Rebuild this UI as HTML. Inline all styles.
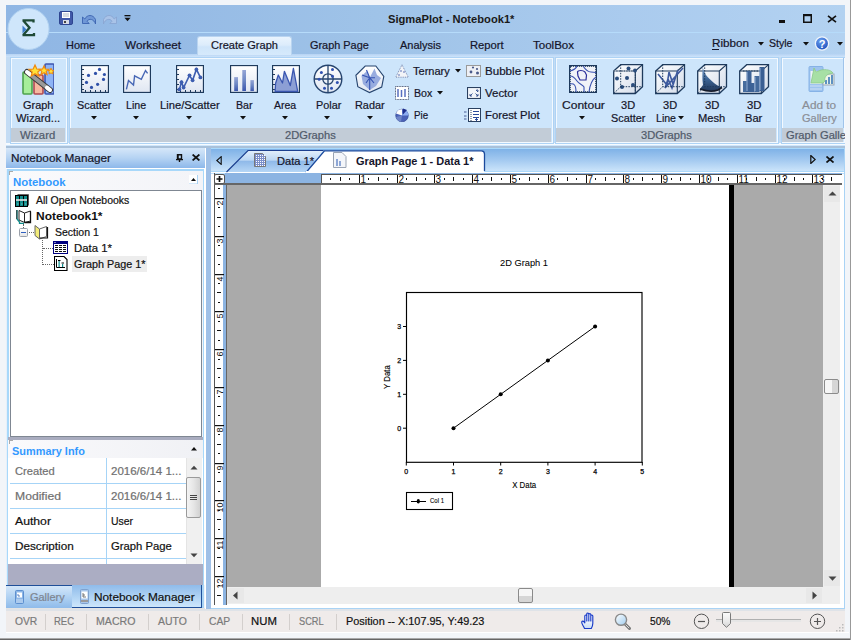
<!DOCTYPE html>
<html><head><meta charset="utf-8"><style>
html,body{margin:0;padding:0;}
body{width:851px;height:640px;position:relative;overflow:hidden;font-family:"Liberation Sans",sans-serif;}
body>div,body>svg{position:absolute;}
.t{white-space:nowrap;transform-origin:0 0;}
</style></head><body>
<div style="left:0px;top:0px;width:851px;height:640px;background:#f2f5f9"></div>
<div style="left:0px;top:638px;width:851px;height:1px;background:#a8a8a8"></div>
<div style="left:0px;top:639px;width:851px;height:1px;background:#666"></div>
<div style="left:850px;top:0px;width:1px;height:640px;background:#999"></div>
<div style="left:6px;top:5px;width:839px;height:27px;background:linear-gradient(90deg,#8fb6e4 0px,#95bae5 150px,#9fc3e8 370px,#aacbee 620px,#b3d2f1 839px)"></div>
<div style="left:6px;top:32px;width:839px;height:1px;background:#b6dbfa"></div>
<div style="left:6px;top:33px;width:839px;height:22px;background:linear-gradient(90deg,#8fb6e4 0px,#95bae5 150px,#9fc3e8 370px,#aacbee 620px,#b3d2f1 839px)"></div>
<div style="left:6px;top:54px;width:839px;height:3px;background:linear-gradient(#b6d3f3,#cde3fa)"></div>
<div style="left:6px;top:57px;width:839px;height:88px;background:#c4dcf4"></div>
<div style="left:6px;top:143px;width:839px;height:2px;background:#f6fbff"></div>
<div style="left:6px;top:145px;width:839px;height:1px;background:#cfe6fb"></div>
<div style="left:6px;top:146px;width:839px;height:2px;background:#a9c1da"></div>
<svg style="left:6px;top:6px;" width="46" height="46" viewBox="0 0 46 46"><circle cx="22.5" cy="23" r="20.5" fill="#cfe6fb" stroke="#b4d4f2" stroke-width="1"/><path d="M16.5 14.3 H27.5 V16.5 M17 14.3 L23.5 21.7 L17 29.2 M16.5 29.2 H28 V27" fill="none" stroke="#1f4a36" stroke-width="2.3"/><path d="M16.5 19.5 L20.5 23.5 L16.5 27.5z" fill="#3d7cc9"/></svg>
<svg style="left:59px;top:11px;" width="14" height="14" viewBox="0 0 14 14"><rect x="0.5" y="0.5" width="13" height="13" rx="1.5" fill="#4058a8" stroke="#2e4590"/><rect x="3" y="1" width="8" height="6" fill="#fff"/><path d="M4 3h6M4 5h6" stroke="#9aa6b8" stroke-width="0.8"/><rect x="4" y="9" width="6" height="4" fill="#d8dce6"/><rect x="5" y="10" width="2" height="2" fill="#444"/></svg>
<svg style="left:81px;top:12px;" width="16" height="13" viewBox="0 0 16 13"><path d="M1.5 11.5 V5 L3.8 7 C6 2.5 12 2 14.5 7.5 L14.5 12 C13 7 8 6 6 9.2 L8.2 11.5z" fill="#6f97d6" stroke="#3b63b0" stroke-width="0.9" stroke-linejoin="round"/></svg>
<svg style="left:102px;top:12px;" width="16" height="13" viewBox="0 0 16 13"><path d="M14.5 11.5 V5 L12.2 7 C10 2.5 4 2 1.5 7.5 L1.5 12 C3 7 8 6 10 9.2 L7.8 11.5z" fill="#a9c3e8" stroke="#8aa6d2" stroke-width="0.9" stroke-linejoin="round"/></svg>
<svg style="left:124px;top:15px;" width="7" height="7" viewBox="0 0 7 7"><rect x="0.5" y="0" width="6" height="1.3" fill="#111"/><path d="M0.5 2.8h6l-3 3.5z" fill="#111"/></svg>
<div class="t" style="left:388px;top:14px;font-size:11px;line-height:11px;color:#1a1a1a;font-weight:bold;transform:scaleX(1.0143);">SigmaPlot - Notebook1*</div>
<div style="left:779px;top:20px;width:6px;height:3px;background:#111"></div>
<svg style="left:803px;top:14px;" width="9" height="9" viewBox="0 0 9 9"><rect x="0.75" y="0.75" width="7.5" height="7.5" fill="none" stroke="#111" stroke-width="1.5"/><rect x="0" y="0" width="9" height="2.2" fill="#111"/></svg>
<svg style="left:827px;top:15px;" width="10" height="8" viewBox="0 0 10 8"><path d="M1 0.8 L9 7.2 M9 0.8 L1 7.2" stroke="#111" stroke-width="1.7"/></svg>
<div style="left:197px;top:36px;width:95px;height:19px;background:linear-gradient(#eaf4fe 0%,#dcecfb 45%,#cfe5fa 55%,#d6eafc 100%);border:1px solid #b9d4f0;border-bottom:none;border-radius:3px 3px 0 0;box-sizing:border-box"></div>
<div class="t" style="left:66px;top:40px;font-size:11px;line-height:11px;color:#15152a;transform:scaleX(0.9951);-webkit-text-stroke:0.2px #15152a;">Home</div>
<div class="t" style="left:125px;top:40px;font-size:11px;line-height:11px;color:#15152a;transform:scaleX(1.0689);-webkit-text-stroke:0.2px #15152a;">Worksheet</div>
<div class="t" style="left:211px;top:40px;font-size:11px;line-height:11px;color:#15152a;transform:scaleX(1.0047);-webkit-text-stroke:0.2px #15152a;">Create Graph</div>
<div class="t" style="left:309.5px;top:40px;font-size:11px;line-height:11px;color:#15152a;transform:scaleX(0.9903);-webkit-text-stroke:0.2px #15152a;">Graph Page</div>
<div class="t" style="left:399.5px;top:40px;font-size:11px;line-height:11px;color:#15152a;transform:scaleX(1.0008);-webkit-text-stroke:0.2px #15152a;">Analysis</div>
<div class="t" style="left:470px;top:40px;font-size:11px;line-height:11px;color:#15152a;transform:scaleX(1.0202);-webkit-text-stroke:0.2px #15152a;">Report</div>
<div class="t" style="left:533px;top:40px;font-size:11px;line-height:11px;color:#15152a;transform:scaleX(1.0471);-webkit-text-stroke:0.2px #15152a;">ToolBox</div>
<div class="t" style="left:712px;top:38px;font-size:11px;line-height:11px;color:#15152a;transform:scaleX(1.0609);-webkit-text-stroke:0.2px #15152a;">Ribbon</div>
<div style="left:712px;top:49px;width:7px;height:1px;background:#15152a"></div>
<svg style="left:758px;top:42px;" width="6" height="4" viewBox="0 0 6 4"><path d="M0 0h6l-3 3.5z" fill="#111"/></svg>
<svg style="left:803px;top:42px;" width="6" height="4" viewBox="0 0 6 4"><path d="M0 0h6l-3 3.5z" fill="#111"/></svg>
<svg style="left:837px;top:42px;" width="6" height="4" viewBox="0 0 6 4"><path d="M0 0h6l-3 3.5z" fill="#111"/></svg>
<div class="t" style="left:769px;top:38px;font-size:11px;line-height:11px;color:#15152a;transform:scaleX(0.9604);-webkit-text-stroke:0.2px #15152a;">Style</div>
<svg style="left:814px;top:36px;" width="16" height="15" viewBox="0 0 16 15"><defs><radialGradient id="hb" cx="0.4" cy="0.3" r="0.8"><stop offset="0" stop-color="#6aa0f0"/><stop offset="1" stop-color="#1848b8"/></radialGradient></defs><circle cx="8" cy="7.5" r="6.6" fill="url(#hb)" stroke="#eef4fc" stroke-width="1.3"/><text x="8" y="11.5" font-family="Liberation Sans" font-weight="bold" font-size="11" fill="#fff" text-anchor="middle">?</text></svg>
<div style="left:10px;top:57px;width:58px;height:87px;background:#cde5fb;border:1px solid #aed3f5;box-sizing:border-box"></div>
<div style="left:11px;top:58px;width:56px;height:85px;border:1px solid #f3f9ff;box-sizing:border-box"></div>
<div style="left:11px;top:128px;width:54px;height:14px;background:#c2ccd7"></div>
<div class="t" style="left:20.2px;top:130px;font-size:11px;line-height:11px;color:#505a6a;transform:scaleX(1.0287);-webkit-text-stroke:0.2px #505a6a;">Wizard</div>
<div style="left:69px;top:57px;width:485px;height:87px;background:#cde5fb;border:1px solid #aed3f5;box-sizing:border-box"></div>
<div style="left:70px;top:58px;width:483px;height:85px;border:1px solid #f3f9ff;box-sizing:border-box"></div>
<div style="left:70px;top:128px;width:481px;height:14px;background:#c2ccd7"></div>
<div class="t" style="left:284.8px;top:130px;font-size:11px;line-height:11px;color:#505a6a;transform:scaleX(1.0128);-webkit-text-stroke:0.2px #505a6a;">2DGraphs</div>
<div style="left:555px;top:57px;width:224px;height:87px;background:#cde5fb;border:1px solid #aed3f5;box-sizing:border-box"></div>
<div style="left:556px;top:58px;width:222px;height:85px;border:1px solid #f3f9ff;box-sizing:border-box"></div>
<div style="left:556px;top:128px;width:220px;height:14px;background:#c2ccd7"></div>
<div class="t" style="left:641px;top:130px;font-size:11px;line-height:11px;color:#505a6a;transform:scaleX(1.0128);-webkit-text-stroke:0.2px #505a6a;">3DGraphs</div>
<div style="left:781px;top:57px;width:65px;height:87px;background:#cde5fb;border:1px solid #aed3f5;box-sizing:border-box"></div>
<div style="left:782px;top:58px;width:63px;height:85px;border:1px solid #f3f9ff;box-sizing:border-box"></div>
<div style="left:782px;top:128px;width:61px;height:14px;background:#c2ccd7"></div>
<div class="t" style="left:785.6px;top:130px;font-size:11px;line-height:11px;color:#505a6a;transform:scaleX(1.0111);-webkit-text-stroke:0.2px #505a6a;">Graph Galle</div>
<div style="left:845px;top:50px;width:5px;height:100px;background:#f2f5f9"></div>
<div style="left:843px;top:58px;width:1px;height:70px;background:#9fc3ea"></div>
<div class="t" style="left:23px;top:100px;font-size:11px;line-height:11px;color:#15152a;transform:scaleX(0.9937);-webkit-text-stroke:0.2px #15152a;">Graph</div>
<div class="t" style="left:16.3px;top:113px;font-size:11px;line-height:11px;color:#15152a;transform:scaleX(1.0160);-webkit-text-stroke:0.2px #15152a;">Wizard...</div>
<div class="t" style="left:77.4px;top:100px;font-size:11px;line-height:11px;color:#15152a;transform:scaleX(0.9864);-webkit-text-stroke:0.2px #15152a;">Scatter</div>
<svg style="left:91px;top:116px;" width="6" height="4" viewBox="0 0 6 4"><path d="M0 0h6l-3 3.5z" fill="#111"/></svg>
<div class="t" style="left:126.4px;top:100px;font-size:11px;line-height:11px;color:#15152a;transform:scaleX(0.9658);-webkit-text-stroke:0.2px #15152a;">Line</div>
<svg style="left:133px;top:116px;" width="6" height="4" viewBox="0 0 6 4"><path d="M0 0h6l-3 3.5z" fill="#111"/></svg>
<div class="t" style="left:160.2px;top:100px;font-size:11px;line-height:11px;color:#15152a;transform:scaleX(1.0162);-webkit-text-stroke:0.2px #15152a;">Line/Scatter</div>
<svg style="left:186px;top:116px;" width="6" height="4" viewBox="0 0 6 4"><path d="M0 0h6l-3 3.5z" fill="#111"/></svg>
<div class="t" style="left:235.8px;top:100px;font-size:11px;line-height:11px;color:#15152a;transform:scaleX(0.9635);-webkit-text-stroke:0.2px #15152a;">Bar</div>
<svg style="left:240px;top:116px;" width="6" height="4" viewBox="0 0 6 4"><path d="M0 0h6l-3 3.5z" fill="#111"/></svg>
<div class="t" style="left:274.3px;top:100px;font-size:11px;line-height:11px;color:#15152a;transform:scaleX(0.9548);-webkit-text-stroke:0.2px #15152a;">Area</div>
<svg style="left:282px;top:116px;" width="6" height="4" viewBox="0 0 6 4"><path d="M0 0h6l-3 3.5z" fill="#111"/></svg>
<div class="t" style="left:315.5px;top:100px;font-size:11px;line-height:11px;color:#15152a;transform:scaleX(0.9849);-webkit-text-stroke:0.2px #15152a;">Polar</div>
<svg style="left:324px;top:116px;" width="6" height="4" viewBox="0 0 6 4"><path d="M0 0h6l-3 3.5z" fill="#111"/></svg>
<div class="t" style="left:355.3px;top:100px;font-size:11px;line-height:11px;color:#15152a;transform:scaleX(0.9877);-webkit-text-stroke:0.2px #15152a;">Radar</div>
<svg style="left:367px;top:116px;" width="6" height="4" viewBox="0 0 6 4"><path d="M0 0h6l-3 3.5z" fill="#111"/></svg>
<div class="t" style="left:562.4px;top:100px;font-size:11px;line-height:11px;color:#15152a;transform:scaleX(1.0956);-webkit-text-stroke:0.2px #15152a;">Contour</div>
<svg style="left:579px;top:116px;" width="6" height="4" viewBox="0 0 6 4"><path d="M0 0h6l-3 3.5z" fill="#111"/></svg>
<div class="t" style="left:620.6px;top:100px;font-size:11px;line-height:11px;color:#15152a;transform:scaleX(1.0027);-webkit-text-stroke:0.2px #15152a;">3D</div>
<div class="t" style="left:662.6px;top:100px;font-size:11px;line-height:11px;color:#15152a;transform:scaleX(1.0027);-webkit-text-stroke:0.2px #15152a;">3D</div>
<div class="t" style="left:704.6px;top:100px;font-size:11px;line-height:11px;color:#15152a;transform:scaleX(1.0240);-webkit-text-stroke:0.2px #15152a;">3D</div>
<div class="t" style="left:746.5px;top:100px;font-size:11px;line-height:11px;color:#15152a;transform:scaleX(1.0311);-webkit-text-stroke:0.2px #15152a;">3D</div>
<div class="t" style="left:610.6px;top:113px;font-size:11px;line-height:11px;color:#15152a;transform:scaleX(0.9864);-webkit-text-stroke:0.2px #15152a;">Scatter</div>
<div class="t" style="left:655.5px;top:113px;font-size:11px;line-height:11px;color:#15152a;transform:scaleX(0.9610);-webkit-text-stroke:0.2px #15152a;">Line</div>
<div class="t" style="left:698.2px;top:113px;font-size:11px;line-height:11px;color:#15152a;transform:scaleX(1.0146);-webkit-text-stroke:0.2px #15152a;">Mesh</div>
<div class="t" style="left:745.2px;top:113px;font-size:11px;line-height:11px;color:#15152a;transform:scaleX(1.0102);-webkit-text-stroke:0.2px #15152a;">Bar</div>
<svg style="left:678px;top:116px;" width="6" height="4" viewBox="0 0 6 4"><path d="M0 0h6l-3 3.5z" fill="#111"/></svg>
<div class="t" style="left:802.4px;top:100px;font-size:11px;line-height:11px;color:#8a8e96;transform:scaleX(1.0740);-webkit-text-stroke:0.2px #8a8e96;">Add to</div>
<div class="t" style="left:802.4px;top:113px;font-size:11px;line-height:11px;color:#8a8e96;transform:scaleX(0.9987);-webkit-text-stroke:0.2px #8a8e96;">Gallery</div>
<div class="t" style="left:413.1px;top:66px;font-size:11px;line-height:11px;color:#15152a;transform:scaleX(1.0031);-webkit-text-stroke:0.2px #15152a;">Ternary</div>
<div class="t" style="left:413.5px;top:88px;font-size:11px;line-height:11px;color:#15152a;transform:scaleX(0.9647);-webkit-text-stroke:0.2px #15152a;">Box</div>
<div class="t" style="left:413.5px;top:110px;font-size:11px;line-height:11px;color:#15152a;transform:scaleX(0.8864);-webkit-text-stroke:0.2px #15152a;">Pie</div>
<div class="t" style="left:485.3px;top:66px;font-size:11px;line-height:11px;color:#15152a;transform:scaleX(1.0531);-webkit-text-stroke:0.2px #15152a;">Bubble Plot</div>
<div class="t" style="left:485.3px;top:88px;font-size:11px;line-height:11px;color:#15152a;transform:scaleX(1.0416);-webkit-text-stroke:0.2px #15152a;">Vector</div>
<div class="t" style="left:485.3px;top:110px;font-size:11px;line-height:11px;color:#15152a;transform:scaleX(1.0260);-webkit-text-stroke:0.2px #15152a;">Forest Plot</div>
<svg style="left:455px;top:69px;" width="6" height="4" viewBox="0 0 6 4"><path d="M0 0h6l-3 3.5z" fill="#111"/></svg>
<svg style="left:437px;top:91px;" width="6" height="4" viewBox="0 0 6 4"><path d="M0 0h6l-3 3.5z" fill="#111"/></svg>
<div style="left:6px;top:148px;width:200px;height:20px;background:linear-gradient(#d6e7f9,#b5d3f3 50%,#8db8ea)"></div>
<div class="t" style="left:10.5px;top:153px;font-size:11px;line-height:11px;color:#15152a;transform:scaleX(1.0681);-webkit-text-stroke:0.2px #15152a;">Notebook Manager</div>
<svg style="left:176px;top:154px;" width="7" height="8" viewBox="0 0 7 8"><path d="M1.5 0.8 H5.5 V5 H1.5z M0 5.6 H7 M3.5 5.6 V8" fill="none" stroke="#111" stroke-width="1.4"/><path d="M2 1v4" stroke="#111" stroke-width="1.4"/></svg>
<svg style="left:192px;top:154px;" width="8" height="7" viewBox="0 0 8 7"><path d="M0.6 0.5 L7.4 6.5 M7.4 0.5 L0.6 6.5" stroke="#111" stroke-width="1.7"/></svg>
<div style="left:6px;top:168px;width:200px;height:1px;background:#ffffff"></div>
<div style="left:6px;top:169px;width:199px;height:416px;background:#a8d8fa"></div>
<div style="left:6px;top:169px;width:1px;height:416px;background:#e6f0fa"></div>
<div style="left:204px;top:169px;width:2px;height:416px;background:#ffffff"></div>
<div style="left:9px;top:171px;width:194px;height:267px;background:linear-gradient(90deg,#fafafc,#f3f4f8)"></div>
<div style="left:9px;top:171px;width:4px;height:1px;background:#aaa"></div>
<div style="left:9px;top:171px;width:1px;height:4px;background:#aaa"></div>
<div class="t" style="left:12.5px;top:177px;font-size:11px;line-height:11px;color:#3399ff;font-weight:bold;transform:scaleX(1.0371);">Notebook</div>
<svg style="left:189px;top:175px;" width="9" height="9" viewBox="0 0 9 9"><rect x="0" y="0" width="9" height="9" fill="#fff"/><path d="M8.5 0V9H0" fill="none" stroke="#a9d3f5"/><path d="M2 6h5l-2.5-3z" fill="#111"/></svg>
<div style="left:10px;top:190px;width:192px;height:247px;background:#fff;border:1px solid #7f8792;box-sizing:border-box"></div>
<div style="left:8px;top:437px;width:195px;height:3px;background:#a9acbf"></div>
<div style="left:8px;top:440px;width:195px;height:18px;background:linear-gradient(90deg,#fafafc,#f0f1f5)"></div>
<div style="left:9px;top:440px;width:4px;height:1px;background:#aaa"></div>
<div style="left:9px;top:440px;width:1px;height:4px;background:#aaa"></div>
<div class="t" style="left:12.3px;top:446px;font-size:11px;line-height:11px;color:#3399ff;font-weight:bold;transform:scaleX(0.9935);">Summary Info</div>
<svg style="left:190px;top:446px;" width="8" height="5" viewBox="0 0 8 5"><path d="M1 4.5h6l-3-3.5z" fill="#111"/></svg>
<div style="left:8px;top:458px;width:195px;height:106px;background:#fff"></div>
<div style="left:10px;top:483px;width:176px;height:1px;background:#a6d4f7"></div>
<div style="left:10px;top:508px;width:176px;height:1px;background:#a6d4f7"></div>
<div style="left:10px;top:533px;width:176px;height:1px;background:#a6d4f7"></div>
<div style="left:10px;top:558px;width:176px;height:1px;background:#a6d4f7"></div>
<div style="left:106px;top:458px;width:1px;height:106px;background:#a6d4f7"></div>
<div style="left:8px;top:564px;width:195px;height:21px;background:#abadc3"></div>
<div style="left:186px;top:458px;width:16px;height:106px;background:#f0f0f0;border-left:1px solid #e4e4e4;box-sizing:border-box"></div>
<svg style="left:190px;top:465px;" width="8" height="5" viewBox="0 0 8 5"><path d="M0.5 4.5 L4 0.8 L7.5 4.5z" fill="#444"/></svg>
<svg style="left:190px;top:553px;" width="8" height="5" viewBox="0 0 8 5"><path d="M0.5 0.5 L4 4.2 L7.5 0.5z" fill="#444"/></svg>
<div style="left:186px;top:477px;width:15px;height:41px;background:linear-gradient(90deg,#f4f4f4,#e6e6e6 50%,#d2d2d2);border:1px solid #9a9a9a;border-radius:2px;box-sizing:border-box"></div>
<svg style="left:189px;top:494px;" width="9" height="7" viewBox="0 0 9 7"><rect x="1" y="1" width="7" height="1" fill="#444"/><rect x="1" y="3" width="7" height="1" fill="#444"/><rect x="1" y="5" width="7" height="1" fill="#444"/></svg>
<div class="t" style="left:14.6px;top:466px;font-size:11px;line-height:11px;color:#707070;transform:scaleX(1.0139);-webkit-text-stroke:0.2px #707070;">Created</div>
<div class="t" style="left:14.6px;top:491px;font-size:11px;line-height:11px;color:#707070;transform:scaleX(1.1059);-webkit-text-stroke:0.2px #707070;">Modified</div>
<div class="t" style="left:14.6px;top:516px;font-size:11px;line-height:11px;color:#111;transform:scaleX(1.1098);-webkit-text-stroke:0.2px #111;">Author</div>
<div class="t" style="left:14.6px;top:541px;font-size:11px;line-height:11px;color:#111;transform:scaleX(1.0667);-webkit-text-stroke:0.2px #111;">Description</div>
<div class="t" style="left:111px;top:466px;font-size:11px;line-height:11px;color:#707070;transform:scaleX(1.0464);-webkit-text-stroke:0.2px #707070;">2016/6/14 1...</div>
<div class="t" style="left:111px;top:491px;font-size:11px;line-height:11px;color:#707070;transform:scaleX(1.0464);-webkit-text-stroke:0.2px #707070;">2016/6/14 1...</div>
<div class="t" style="left:111px;top:516px;font-size:11px;line-height:11px;color:#111;transform:scaleX(0.9475);-webkit-text-stroke:0.2px #111;">User</div>
<div class="t" style="left:111px;top:541px;font-size:11px;line-height:11px;color:#111;transform:scaleX(1.0240);-webkit-text-stroke:0.2px #111;">Graph Page</div>
<svg style="left:14px;top:193px;" width="17" height="15" viewBox="0 0 17 15"><path d="M2 3 L4 1 H15 L13 3z" fill="#666"/><path d="M13 3 L15 1 V12 L13 14z" fill="#555"/><rect x="1.5" y="2.5" width="4" height="11" fill="#108a8a" stroke="#000" stroke-width="1"/><rect x="5.5" y="2.5" width="4" height="11" fill="#108a8a" stroke="#000" stroke-width="1"/><rect x="9.5" y="2.5" width="4" height="11" fill="#108a8a" stroke="#000" stroke-width="1"/><path d="M2 7h11" stroke="#e8e8e8" stroke-width="1.6"/><path d="M3.5 11h.8M7.5 11h.8M11.5 11h.8" stroke="#cfe" stroke-width="1"/></svg>
<div class="t" style="left:35.9px;top:195px;font-size:11px;line-height:11px;color:#111;transform:scaleX(0.9540);-webkit-text-stroke:0.2px #111;">All Open Notebooks</div>
<svg style="left:16px;top:208px;" width="16" height="16" viewBox="0 0 16 16"><path d="M3 2.5 L8.5 5 V14.5 L3 12z" fill="#fff" stroke="#222" stroke-width="1"/><path d="M8.5 5 L14.5 3 V13 L8.5 14.5z" fill="#fff" stroke="#222" stroke-width="1"/><path d="M14.5 3.5 V14.5 H8.5" fill="none" stroke="#111" stroke-width="1.3"/><path d="M1 2 V11 L3.5 14 V15.5 H8" fill="none" stroke="#0f8a8a" stroke-width="1.3"/><path d="M0.8 2 V11" stroke="#111" stroke-width="0.8"/></svg>
<div class="t" style="left:36.4px;top:211px;font-size:11px;line-height:11px;color:#111;font-weight:bold;transform:scaleX(1.0879);">Notebook1*</div>
<svg style="left:34px;top:224px;" width="15" height="16" viewBox="0 0 15 16"><path d="M1 1.5 L5.5 5 V15 L1 11.5z" fill="#f3ec7a" stroke="#666" stroke-width="1"/><path d="M5.5 5 L12.5 2.5 V12.5 L5.5 15z" fill="#fff" stroke="#666" stroke-width="1"/><path d="M13.5 3 V14 H6" fill="none" stroke="#111" stroke-width="1.2"/></svg>
<div style="left:19px;top:228px;width:9px;height:9px;background:linear-gradient(#fff,#e6e6e6);border:1px solid #9aa0aa;border-radius:1.5px;box-sizing:border-box"></div>
<div style="left:21px;top:232px;width:5px;height:1px;background:#3060c0"></div>
<div class="t" style="left:54.7px;top:227px;font-size:11px;line-height:11px;color:#111;transform:scaleX(0.9541);-webkit-text-stroke:0.2px #111;">Section 1</div>
<svg style="left:53px;top:241px;" width="15" height="13" viewBox="0 0 15 13"><rect x="0.5" y="0.5" width="14" height="12" fill="#fff" stroke="#000080" stroke-width="1"/><rect x="0.5" y="0.5" width="14" height="2.5" fill="#000080"/><rect x="1.5" y="1" width="1" height="1" fill="#fff"/><rect x="2" y="4" width="3" height="1" fill="#111"/><rect x="2" y="6" width="3" height="1" fill="#111"/><rect x="2" y="8" width="3" height="1" fill="#111"/><rect x="2" y="10" width="3" height="1" fill="#111"/><rect x="6" y="4" width="3" height="1" fill="#111"/><rect x="6" y="6" width="3" height="1" fill="#111"/><rect x="6" y="8" width="3" height="1" fill="#111"/><rect x="6" y="10" width="3" height="1" fill="#111"/><rect x="10" y="4" width="3" height="1" fill="#111"/><rect x="10" y="6" width="3" height="1" fill="#111"/><rect x="10" y="8" width="3" height="1" fill="#111"/><rect x="10" y="10" width="3" height="1" fill="#111"/></svg>
<div class="t" style="left:73.8px;top:243px;font-size:11px;line-height:11px;color:#111;transform:scaleX(1.0322);-webkit-text-stroke:0.2px #111;">Data 1*</div>
<div style="left:72px;top:256px;width:75px;height:16px;background:#ededed"></div>
<svg style="left:54px;top:256px;" width="14" height="15" viewBox="0 0 14 15"><path d="M0.5 0.5 H10 L13 3.5 V14.5 H0.5z" fill="#fff" stroke="#000" stroke-width="1.1"/><path d="M2.5 3 V11.5 H11" fill="none" stroke="#000" stroke-width="1"/><rect x="4.5" y="5" width="1.2" height="6" fill="#109090"/><path d="M4 4.5h2.5" stroke="#000"/><rect x="8" y="8" width="1.2" height="3" fill="#109090"/><path d="M7.5 7h2.5" stroke="#000"/></svg>
<div class="t" style="left:73.8px;top:259px;font-size:11px;line-height:11px;color:#111;transform:scaleX(0.9802);-webkit-text-stroke:0.2px #111;">Graph Page 1*</div>
<div style="left:23px;top:224px;width:0;height:4px;border-left:1px dotted #666"></div>
<div style="left:29px;top:232px;width:5px;height:0;border-top:1px dotted #666"></div>
<div style="left:42px;top:240px;width:0;height:25px;border-left:1px dotted #666"></div>
<div style="left:43px;top:248px;width:10px;height:0;border-top:1px dotted #666"></div>
<div style="left:43px;top:264px;width:11px;height:0;border-top:1px dotted #666"></div>
<div style="left:6px;top:585px;width:66px;height:23px;background:linear-gradient(#d3e6f9,#a9cdf1 60%,#8fbbea);border-top:1.5px solid #1f4f99;box-sizing:border-box"></div>
<div style="left:72px;top:585px;width:130px;height:23px;background:linear-gradient(#8fbbea,#b4d6f5 60%,#cde6fb);border-bottom:1.5px solid #1f4f99;border-right:1px solid #1f4f99;box-sizing:border-box"></div>
<div style="left:202px;top:585px;width:2px;height:23px;background:#a9d3f5"></div>
<div style="left:6px;top:608px;width:199px;height:3px;background:#e4e4e4"></div>
<div class="t" style="left:30px;top:592px;font-size:11px;line-height:11px;color:#7f8590;transform:scaleX(0.9959);-webkit-text-stroke:0.2px #7f8590;">Gallery</div>
<div class="t" style="left:94.3px;top:592px;font-size:11px;line-height:11px;color:#111;transform:scaleX(1.0756);-webkit-text-stroke:0.2px #111;">Notebook Manager</div>
<svg style="left:15px;top:590px;" width="9" height="14" viewBox="0 0 9 14"><rect x="0.5" y="0.5" width="8" height="13" rx="1" fill="#8db6e6" stroke="#5d8fcf"/><rect x="2" y="2.5" width="5" height="5" fill="#fff"/><path d="M3 4v2h2" stroke="#3a6ab8" fill="none" stroke-width="0.8"/><path d="M1 10h7M1 12h7" stroke="#c9def5" stroke-width="1"/></svg>
<svg style="left:80px;top:589px;" width="9" height="15" viewBox="0 0 9 15"><rect x="0.5" y="0.5" width="8" height="14" rx="1" fill="#a9c6ea" stroke="#7fa2cf"/><rect x="1.5" y="2.5" width="6" height="7" fill="#fff"/><path d="M3 4v4h3M3 6h2" stroke="#555" fill="none" stroke-width="0.8"/><rect x="1" y="11" width="7" height="2" fill="#9a9a9a"/></svg>
<div style="left:205px;top:148px;width:1px;height:463px;background:#ffffff"></div>
<div style="left:206px;top:148px;width:5px;height:463px;background:#9fc0e7"></div>
<div style="left:211px;top:148px;width:634px;height:461px;background:#fff"></div>
<div style="left:844px;top:148px;width:1px;height:461px;background:#a9d3f5"></div>
<div style="left:211px;top:608px;width:634px;height:1px;background:#a9d3f5"></div>
<div style="left:211px;top:148px;width:633px;height:24px;background:linear-gradient(#a9d9fb 0px,#a9d9fb 1px,#7fb2e7 1px,#a3c9f0 12px,#cbe4fa 23px,#abd9fb 23px)"></div>
<svg style="left:216px;top:156px;" width="6" height="9" viewBox="0 0 6 9"><path d="M5.2 0.6 L0.8 4.5 L5.2 8.4z" fill="none" stroke="#111" stroke-width="1.1"/></svg>
<svg style="left:810px;top:155px;" width="6" height="9" viewBox="0 0 6 9"><path d="M0.8 0.5 L5.2 4.5 L0.8 8.5z" fill="none" stroke="#111" stroke-width="1.2"/></svg>
<svg style="left:826px;top:156px;" width="8" height="7" viewBox="0 0 8 7"><path d="M0.5 0.5 L7.5 6.5 M7.5 0.5 L0.5 6.5" stroke="#111" stroke-width="1.7"/></svg>
<svg style="left:226px;top:149px;" width="100" height="24" viewBox="0 0 100 24"><defs><linearGradient id="gd" x1="0" y1="0" x2="0" y2="1"><stop offset="0" stop-color="#e3effb"/><stop offset="0.45" stop-color="#bcd7f4"/><stop offset="0.5" stop-color="#8fb9e9"/><stop offset="1" stop-color="#b6d6f5"/></linearGradient></defs><path d="M0.5 23 L22 1.5 H97.5 L81 23z" fill="url(#gd)"/><path d="M0.5 23 L22 1.5 H97.5" fill="none" stroke="#1c3f8f" stroke-width="1.2"/></svg>
<svg style="left:254px;top:153px;" width="12" height="14" viewBox="0 0 12 14"><path d="M0.5 0.5 H8.5 L11.5 3.5 V13.5 H0.5z" fill="#7c8fca" stroke="#777"/><rect x="2" y="2" width="1" height="1" fill="#fff"/><rect x="2" y="4" width="1" height="1" fill="#fff"/><rect x="2" y="6" width="1" height="1" fill="#fff"/><rect x="2" y="8" width="1" height="1" fill="#fff"/><rect x="2" y="10" width="1" height="1" fill="#fff"/><rect x="2" y="12" width="1" height="1" fill="#fff"/><rect x="4" y="2" width="1" height="1" fill="#fff"/><rect x="4" y="4" width="1" height="1" fill="#fff"/><rect x="4" y="6" width="1" height="1" fill="#fff"/><rect x="4" y="8" width="1" height="1" fill="#fff"/><rect x="4" y="10" width="1" height="1" fill="#fff"/><rect x="4" y="12" width="1" height="1" fill="#fff"/><rect x="6" y="2" width="1" height="1" fill="#fff"/><rect x="6" y="4" width="1" height="1" fill="#fff"/><rect x="6" y="6" width="1" height="1" fill="#fff"/><rect x="6" y="8" width="1" height="1" fill="#fff"/><rect x="6" y="10" width="1" height="1" fill="#fff"/><rect x="6" y="12" width="1" height="1" fill="#fff"/><rect x="8" y="2" width="1" height="1" fill="#fff"/><rect x="8" y="4" width="1" height="1" fill="#fff"/><rect x="8" y="6" width="1" height="1" fill="#fff"/><rect x="8" y="8" width="1" height="1" fill="#fff"/><rect x="8" y="10" width="1" height="1" fill="#fff"/><rect x="8" y="12" width="1" height="1" fill="#fff"/><rect x="10" y="2" width="1" height="1" fill="#fff"/><rect x="10" y="4" width="1" height="1" fill="#fff"/><rect x="10" y="6" width="1" height="1" fill="#fff"/><rect x="10" y="8" width="1" height="1" fill="#fff"/><rect x="10" y="10" width="1" height="1" fill="#fff"/><rect x="10" y="12" width="1" height="1" fill="#fff"/></svg>
<div class="t" style="left:276.5px;top:156px;font-size:11px;line-height:11px;color:#15152a;transform:scaleX(1.0077);-webkit-text-stroke:0.2px #15152a;">Data 1*</div>
<svg style="left:305px;top:150px;" width="181" height="23" viewBox="0 0 181 23"><path d="M1 22.5 L19.5 0.8 H176.5 Q179.5 0.8 179.5 4 V21" fill="#fff" stroke="#1c4a9c" stroke-width="1.3"/></svg>
<div style="left:306px;top:171px;width:178px;height:2px;background:#fff"></div>
<svg style="left:333px;top:152px;" width="14" height="16" viewBox="0 0 14 16"><path d="M0.5 0.5 H9 L13 4.5 V15.5 H0.5z" fill="#f4f6fa" stroke="#9aa4b4"/><rect x="3" y="7" width="2" height="7" fill="#8ea7d6"/><rect x="6" y="9" width="2" height="5" fill="#8ea7d6"/></svg>
<div class="t" style="left:356.4px;top:156px;font-size:11px;line-height:11px;color:#15152a;font-weight:bold;transform:scaleX(0.9952);">Graph Page 1 - Data 1*</div>
<div style="left:211px;top:173px;width:633px;height:1px;background:#bfe0fb"></div>
<div style="left:214px;top:173px;width:1px;height:432px;background:#555"></div>
<div style="left:215px;top:174px;width:8px;height:431px;background:#fff"></div>
<div style="left:223px;top:174px;width:3px;height:431px;background:#8cb4e2"></div>
<div style="left:225px;top:173px;width:617px;height:10px;background:#8cb4e2"></div>
<div style="left:321px;top:174px;width:521px;height:10px;background:#fff"></div>
<div style="left:321px;top:174px;width:521px;height:1px;background:#555"></div>
<div style="left:321px;top:174px;width:1px;height:10px;background:#555"></div>
<div style="left:214px;top:183px;width:628px;height:2px;background:#666"></div>
<div style="left:225.5px;top:183px;width:1.5px;height:422px;background:#666"></div>
<div style="left:214px;top:174px;width:11px;height:10px;background:#fff;border:1px solid #555;border-radius:2px;box-sizing:border-box"></div>
<svg style="left:214px;top:174px;" width="11" height="10" viewBox="0 0 11 10"><path d="M5.5 2v6M2.5 5h6" stroke="#111" stroke-width="1.7"/></svg>
<div style="left:227px;top:185px;width:596px;height:402px;background:#aaaaaa"></div>
<div style="left:321px;top:185px;width:408px;height:402px;background:#fff"></div>
<div style="left:729px;top:185px;width:5px;height:402px;background:#000"></div>
<div style="left:823px;top:185px;width:17px;height:402px;background:#eeeeee"></div>
<div style="left:227px;top:587px;width:596px;height:17px;background:#eeeeee"></div>
<div style="left:823px;top:587px;width:17px;height:17px;background:#eeeeee"></div>
<div style="left:824px;top:570px;width:16px;height:16px;background:#e8e8e8"></div>
<div style="left:824px;top:186px;width:16px;height:16px;background:#e8e8e8"></div>
<div style="left:806px;top:588px;width:16px;height:15px;background:#e8e8e8"></div>
<div style="left:228px;top:588px;width:16px;height:15px;background:#e8e8e8"></div>
<svg style="left:828px;top:191px;" width="9" height="5" viewBox="0 0 9 5"><path d="M0.5 4.5 L4.5 0.5 L8.5 4.5z" fill="#444"/></svg>
<svg style="left:828px;top:576px;" width="9" height="6" viewBox="0 0 9 6"><path d="M0.5 0.5 L4.5 4.8 L8.5 0.5z" fill="#444"/></svg>
<svg style="left:232px;top:591px;" width="6" height="9" viewBox="0 0 6 9"><path d="M5.5 0.5 L1 4.5 L5.5 8.5z" fill="#444"/></svg>
<svg style="left:812px;top:591px;" width="6" height="9" viewBox="0 0 6 9"><path d="M0.5 0.5 L5 4.5 L0.5 8.5z" fill="#444"/></svg>
<div style="left:518px;top:588px;width:15px;height:15px;background:linear-gradient(#f6f6f6 50%,#d6d6d6 50%);border:1px solid #8a8a8a;border-radius:2px;box-sizing:border-box"></div>
<div style="left:824px;top:379px;width:15px;height:15px;background:linear-gradient(90deg,#f6f6f6 50%,#d6d6d6 50%);border:1px solid #8a8a8a;border-radius:2px;box-sizing:border-box"></div>
<svg style="left:0;top:0" width="851" height="640"><rect x="330" y="178" width="1" height="2" fill="#111"/><rect x="340" y="177" width="1" height="4" fill="#111"/><rect x="349" y="178" width="1" height="2" fill="#111"/><rect x="359" y="175" width="1" height="8" fill="#111"/><text x="360.5" y="183" font-family="Liberation Sans" font-size="10" fill="#111">1</text><rect x="368" y="178" width="1" height="2" fill="#111"/><rect x="378" y="177" width="1" height="4" fill="#111"/><rect x="387" y="178" width="1" height="2" fill="#111"/><rect x="397" y="175" width="1" height="8" fill="#111"/><text x="398.5" y="183" font-family="Liberation Sans" font-size="10" fill="#111">2</text><rect x="406" y="178" width="1" height="2" fill="#111"/><rect x="416" y="177" width="1" height="4" fill="#111"/><rect x="425" y="178" width="1" height="2" fill="#111"/><rect x="434" y="175" width="1" height="8" fill="#111"/><text x="435.5" y="183" font-family="Liberation Sans" font-size="10" fill="#111">3</text><rect x="444" y="178" width="1" height="2" fill="#111"/><rect x="453" y="177" width="1" height="4" fill="#111"/><rect x="463" y="178" width="1" height="2" fill="#111"/><rect x="472" y="175" width="1" height="8" fill="#111"/><text x="473.5" y="183" font-family="Liberation Sans" font-size="10" fill="#111">4</text><rect x="482" y="178" width="1" height="2" fill="#111"/><rect x="491" y="177" width="1" height="4" fill="#111"/><rect x="501" y="178" width="1" height="2" fill="#111"/><rect x="510" y="175" width="1" height="8" fill="#111"/><text x="511.5" y="183" font-family="Liberation Sans" font-size="10" fill="#111">5</text><rect x="519" y="178" width="1" height="2" fill="#111"/><rect x="529" y="177" width="1" height="4" fill="#111"/><rect x="538" y="178" width="1" height="2" fill="#111"/><rect x="548" y="175" width="1" height="8" fill="#111"/><text x="549.5" y="183" font-family="Liberation Sans" font-size="10" fill="#111">6</text><rect x="557" y="178" width="1" height="2" fill="#111"/><rect x="567" y="177" width="1" height="4" fill="#111"/><rect x="576" y="178" width="1" height="2" fill="#111"/><rect x="586" y="175" width="1" height="8" fill="#111"/><text x="587.5" y="183" font-family="Liberation Sans" font-size="10" fill="#111">7</text><rect x="595" y="178" width="1" height="2" fill="#111"/><rect x="605" y="177" width="1" height="4" fill="#111"/><rect x="614" y="178" width="1" height="2" fill="#111"/><rect x="623" y="175" width="1" height="8" fill="#111"/><text x="624.5" y="183" font-family="Liberation Sans" font-size="10" fill="#111">8</text><rect x="633" y="178" width="1" height="2" fill="#111"/><rect x="642" y="177" width="1" height="4" fill="#111"/><rect x="652" y="178" width="1" height="2" fill="#111"/><rect x="661" y="175" width="1" height="8" fill="#111"/><text x="662.5" y="183" font-family="Liberation Sans" font-size="10" fill="#111">9</text><rect x="671" y="178" width="1" height="2" fill="#111"/><rect x="680" y="177" width="1" height="4" fill="#111"/><rect x="690" y="178" width="1" height="2" fill="#111"/><rect x="699" y="175" width="1" height="8" fill="#111"/><text x="700.5" y="183" font-family="Liberation Sans" font-size="10" fill="#111">10</text><rect x="708" y="178" width="1" height="2" fill="#111"/><rect x="718" y="177" width="1" height="4" fill="#111"/><rect x="727" y="178" width="1" height="2" fill="#111"/><rect x="737" y="175" width="1" height="8" fill="#111"/><text x="738.5" y="183" font-family="Liberation Sans" font-size="10" fill="#111">11</text><rect x="746" y="178" width="1" height="2" fill="#111"/><rect x="756" y="177" width="1" height="4" fill="#111"/><rect x="765" y="178" width="1" height="2" fill="#111"/><rect x="775" y="175" width="1" height="8" fill="#111"/><text x="776.5" y="183" font-family="Liberation Sans" font-size="10" fill="#111">12</text><rect x="784" y="178" width="1" height="2" fill="#111"/><rect x="794" y="177" width="1" height="4" fill="#111"/><rect x="803" y="178" width="1" height="2" fill="#111"/><rect x="812" y="175" width="1" height="8" fill="#111"/><text x="813.5" y="183" font-family="Liberation Sans" font-size="10" fill="#111">13</text><rect x="822" y="178" width="1" height="2" fill="#111"/><rect x="831" y="177" width="1" height="4" fill="#111"/></svg>
<svg style="left:0;top:0" width="851" height="640"><rect x="218" y="188" width="2" height="1" fill="#111"/><rect x="215" y="198" width="9" height="1.2" fill="#111"/><text transform="translate(223,200.5) rotate(-90)" font-family="Liberation Sans" font-size="9" text-anchor="end" fill="#111">2</text><rect x="218" y="207" width="2" height="1" fill="#111"/><rect x="217" y="217" width="4" height="1" fill="#111"/><rect x="218" y="226" width="2" height="1" fill="#111"/><rect x="215" y="236" width="9" height="1.2" fill="#111"/><text transform="translate(223,238.5) rotate(-90)" font-family="Liberation Sans" font-size="9" text-anchor="end" fill="#111">3</text><rect x="218" y="245" width="2" height="1" fill="#111"/><rect x="217" y="255" width="4" height="1" fill="#111"/><rect x="218" y="264" width="2" height="1" fill="#111"/><rect x="215" y="274" width="9" height="1.2" fill="#111"/><text transform="translate(223,276.5) rotate(-90)" font-family="Liberation Sans" font-size="9" text-anchor="end" fill="#111">4</text><rect x="218" y="283" width="2" height="1" fill="#111"/><rect x="217" y="292" width="4" height="1" fill="#111"/><rect x="218" y="302" width="2" height="1" fill="#111"/><rect x="215" y="311" width="9" height="1.2" fill="#111"/><text transform="translate(223,313.5) rotate(-90)" font-family="Liberation Sans" font-size="9" text-anchor="end" fill="#111">5</text><rect x="218" y="321" width="2" height="1" fill="#111"/><rect x="217" y="330" width="4" height="1" fill="#111"/><rect x="218" y="340" width="2" height="1" fill="#111"/><rect x="215" y="349" width="9" height="1.2" fill="#111"/><text transform="translate(223,351.5) rotate(-90)" font-family="Liberation Sans" font-size="9" text-anchor="end" fill="#111">6</text><rect x="218" y="359" width="2" height="1" fill="#111"/><rect x="217" y="368" width="4" height="1" fill="#111"/><rect x="218" y="377" width="2" height="1" fill="#111"/><rect x="215" y="387" width="9" height="1.2" fill="#111"/><text transform="translate(223,389.5) rotate(-90)" font-family="Liberation Sans" font-size="9" text-anchor="end" fill="#111">7</text><rect x="218" y="396" width="2" height="1" fill="#111"/><rect x="217" y="406" width="4" height="1" fill="#111"/><rect x="218" y="415" width="2" height="1" fill="#111"/><rect x="215" y="425" width="9" height="1.2" fill="#111"/><text transform="translate(223,427.5) rotate(-90)" font-family="Liberation Sans" font-size="9" text-anchor="end" fill="#111">8</text><rect x="218" y="434" width="2" height="1" fill="#111"/><rect x="217" y="444" width="4" height="1" fill="#111"/><rect x="218" y="453" width="2" height="1" fill="#111"/><rect x="215" y="463" width="9" height="1.2" fill="#111"/><text transform="translate(223,465.5) rotate(-90)" font-family="Liberation Sans" font-size="9" text-anchor="end" fill="#111">9</text><rect x="218" y="472" width="2" height="1" fill="#111"/><rect x="217" y="481" width="4" height="1" fill="#111"/><rect x="218" y="491" width="2" height="1" fill="#111"/><rect x="215" y="500" width="9" height="1.2" fill="#111"/><text transform="translate(223,502.5) rotate(-90)" font-family="Liberation Sans" font-size="9" text-anchor="end" fill="#111">10</text><rect x="218" y="510" width="2" height="1" fill="#111"/><rect x="217" y="519" width="4" height="1" fill="#111"/><rect x="218" y="529" width="2" height="1" fill="#111"/><rect x="215" y="538" width="9" height="1.2" fill="#111"/><text transform="translate(223,540.5) rotate(-90)" font-family="Liberation Sans" font-size="9" text-anchor="end" fill="#111">11</text><rect x="218" y="548" width="2" height="1" fill="#111"/><rect x="217" y="557" width="4" height="1" fill="#111"/><rect x="218" y="566" width="2" height="1" fill="#111"/><rect x="215" y="576" width="9" height="1.2" fill="#111"/><text transform="translate(223,578.5) rotate(-90)" font-family="Liberation Sans" font-size="9" text-anchor="end" fill="#111">12</text><rect x="218" y="585" width="2" height="1" fill="#111"/><rect x="217" y="595" width="4" height="1" fill="#111"/></svg>
<svg style="left:0;top:0" width="851" height="640"><rect x="406.5" y="292.5" width="235.5" height="169.8" fill="none" stroke="#000" stroke-width="1.15"/><path d="M406.3 462 V465.5" stroke="#000" stroke-width="1"/><text x="406.3" y="474" font-family="Liberation Sans" font-size="7" text-anchor="middle" fill="#000" stroke="#000" stroke-width="0.25">0</text><path d="M453.5 462 V465.5" stroke="#000" stroke-width="1"/><text x="453.5" y="474" font-family="Liberation Sans" font-size="7" text-anchor="middle" fill="#000" stroke="#000" stroke-width="0.25">1</text><path d="M500.7 462 V465.5" stroke="#000" stroke-width="1"/><text x="500.7" y="474" font-family="Liberation Sans" font-size="7" text-anchor="middle" fill="#000" stroke="#000" stroke-width="0.25">2</text><path d="M547.9 462 V465.5" stroke="#000" stroke-width="1"/><text x="547.9" y="474" font-family="Liberation Sans" font-size="7" text-anchor="middle" fill="#000" stroke="#000" stroke-width="0.25">3</text><path d="M595.1 462 V465.5" stroke="#000" stroke-width="1"/><text x="595.1" y="474" font-family="Liberation Sans" font-size="7" text-anchor="middle" fill="#000" stroke="#000" stroke-width="0.25">4</text><path d="M642.3 462 V465.5" stroke="#000" stroke-width="1"/><text x="642.3" y="474" font-family="Liberation Sans" font-size="7" text-anchor="middle" fill="#000" stroke="#000" stroke-width="0.25">5</text><path d="M403 428.2 H406.5" stroke="#000" stroke-width="1"/><text x="401.2" y="430.8" font-family="Liberation Sans" font-size="7" text-anchor="end" fill="#000" stroke="#000" stroke-width="0.25">0</text><path d="M403 394.3 H406.5" stroke="#000" stroke-width="1"/><text x="401.2" y="396.9" font-family="Liberation Sans" font-size="7" text-anchor="end" fill="#000" stroke="#000" stroke-width="0.25">1</text><path d="M403 360.4 H406.5" stroke="#000" stroke-width="1"/><text x="401.2" y="363.0" font-family="Liberation Sans" font-size="7" text-anchor="end" fill="#000" stroke="#000" stroke-width="0.25">2</text><path d="M403 326.5 H406.5" stroke="#000" stroke-width="1"/><text x="401.2" y="329.1" font-family="Liberation Sans" font-size="7" text-anchor="end" fill="#000" stroke="#000" stroke-width="0.25">3</text><polyline points="453.5,428.2 500.7,394.3 547.9,360.4 595.1,326.5" fill="none" stroke="#000" stroke-width="1"/><circle cx="453.5" cy="428.2" r="2" fill="#000"/><circle cx="500.7" cy="394.3" r="2" fill="#000"/><circle cx="547.9" cy="360.4" r="2" fill="#000"/><circle cx="595.1" cy="326.5" r="2" fill="#000"/><text x="512.2" y="487.8" font-family="Liberation Sans" font-size="9" textLength="24" lengthAdjust="spacingAndGlyphs" fill="#000" stroke="#000" stroke-width="0.1">X Data</text><text transform="translate(389.6,388.9) rotate(-90)" font-family="Liberation Sans" font-size="9" textLength="23.6" lengthAdjust="spacingAndGlyphs" fill="#000" stroke="#000" stroke-width="0.15">Y Data</text><text x="500" y="265.6" font-family="Liberation Sans" font-size="9.5" textLength="48" lengthAdjust="spacingAndGlyphs" fill="#000" stroke="#000" stroke-width="0.05">2D Graph 1</text><rect x="406.5" y="492.5" width="46" height="17" fill="none" stroke="#000" stroke-width="1.1"/><path d="M411 501.5 H426" stroke="#000" stroke-width="1"/><ellipse cx="418.3" cy="501.2" rx="1.6" ry="2.2" fill="#000"/><text x="430" y="503.3" font-family="Liberation Sans" font-size="7" textLength="14" lengthAdjust="spacingAndGlyphs" fill="#000" stroke="#000" stroke-width="0.1">Col 1</text></svg>
<div style="left:6px;top:609px;width:839px;height:2px;background:#dfe3e8"></div>
<div style="left:6px;top:611px;width:839px;height:21px;background:#efebea"></div>
<div style="left:6px;top:632px;width:843px;height:1px;background:#ffffff"></div>
<div style="left:6px;top:633px;width:843px;height:4px;background:#f3f6f9"></div>
<div style="left:45px;top:614px;width:1px;height:16px;background:#d3cfcd"></div>
<div style="left:86px;top:614px;width:1px;height:16px;background:#d3cfcd"></div>
<div style="left:148px;top:614px;width:1px;height:16px;background:#d3cfcd"></div>
<div style="left:199px;top:614px;width:1px;height:16px;background:#d3cfcd"></div>
<div style="left:242px;top:614px;width:1px;height:16px;background:#d3cfcd"></div>
<div style="left:289px;top:614px;width:1px;height:16px;background:#d3cfcd"></div>
<div style="left:336px;top:614px;width:1px;height:16px;background:#d3cfcd"></div>
<div class="t" style="left:15.3px;top:616px;font-size:11px;line-height:11px;color:#7a7a7a;transform:scaleX(0.9353);-webkit-text-stroke:0.2px #7a7a7a;">OVR</div>
<div class="t" style="left:54px;top:616px;font-size:11px;line-height:11px;color:#7a7a7a;transform:scaleX(0.8614);-webkit-text-stroke:0.2px #7a7a7a;">REC</div>
<div class="t" style="left:96.4px;top:616px;font-size:11px;line-height:11px;color:#7a7a7a;transform:scaleX(0.9624);-webkit-text-stroke:0.2px #7a7a7a;">MACRO</div>
<div class="t" style="left:158px;top:616px;font-size:11px;line-height:11px;color:#7a7a7a;transform:scaleX(0.9486);-webkit-text-stroke:0.2px #7a7a7a;">AUTO</div>
<div class="t" style="left:208.8px;top:616px;font-size:11px;line-height:11px;color:#7a7a7a;transform:scaleX(0.9370);-webkit-text-stroke:0.2px #7a7a7a;">CAP</div>
<div class="t" style="left:251px;top:616px;font-size:11px;line-height:11px;color:#111;transform:scaleX(1.0307);-webkit-text-stroke:0.2px #111;">NUM</div>
<div class="t" style="left:299.4px;top:616px;font-size:11px;line-height:11px;color:#7a7a7a;transform:scaleX(0.8383);-webkit-text-stroke:0.2px #7a7a7a;">SCRL</div>
<div class="t" style="left:346.3px;top:616px;font-size:11px;line-height:11px;color:#111;transform:scaleX(0.9895);-webkit-text-stroke:0.2px #111;">Position -- X:107.95, Y:49.23</div>
<svg style="left:581px;top:612px;" width="15" height="18" viewBox="0 0 15 18"><defs><linearGradient id="hg" x1="0" y1="0" x2="0" y2="1"><stop offset="0.3" stop-color="#ffffff"/><stop offset="1" stop-color="#c9dcf5"/></linearGradient></defs><path d="M3.5 16.5 C2.5 14 0.7 12 0.7 10.3 C0.7 8.8 2.3 8.8 3.3 10.2 L3.8 10.8 V4 C3.8 2.6 5.8 2.6 5.8 4 V9 V2 C5.8 0.6 7.8 0.6 7.8 2 V9 V2.6 C7.8 1.2 9.8 1.2 9.8 2.6 V9 V4 C9.8 2.6 11.8 2.6 11.8 4 V11.5 C11.8 13.5 11.2 14.8 10.3 16.5 Z" fill="url(#hg)" stroke="#1a3cc8" stroke-width="1.15" stroke-linejoin="round"/></svg>
<svg style="left:614px;top:613px;" width="18" height="18" viewBox="0 0 18 18"><defs><linearGradient id="mg" x1="0" y1="0" x2="1" y2="1"><stop offset="0" stop-color="#ffffff"/><stop offset="1" stop-color="#9fcdf0"/></linearGradient></defs><path d="M11 11 L15.5 15.5" stroke="#777" stroke-width="3" stroke-linecap="round"/><path d="M11.5 11.5 L15.2 15.2" stroke="#ddd" stroke-width="1"/><circle cx="7" cy="6.7" r="5.6" fill="url(#mg)" stroke="#8a8a8a" stroke-width="1.4"/></svg>
<div class="t" style="left:649.6px;top:616px;font-size:11px;line-height:11px;color:#111;transform:scaleX(0.9260);-webkit-text-stroke:0.2px #111;">50%</div>
<svg style="left:693px;top:613px;" width="17" height="17" viewBox="0 0 17 17"><circle cx="8.5" cy="8.3" r="7.2" fill="none" stroke="#555" stroke-width="1"/><path d="M5 8.5h7" stroke="#555" stroke-width="1.2"/></svg>
<svg style="left:809px;top:613px;" width="17" height="17" viewBox="0 0 17 17"><circle cx="8.5" cy="8.3" r="7.2" fill="none" stroke="#555" stroke-width="1"/><path d="M5 8.5h7M8.5 5v7" stroke="#555" stroke-width="1.2"/></svg>
<div style="left:716px;top:619px;width:85px;height:3px;background:#e6e6e6;border-top:1px solid #b0b0b0;box-sizing:border-box"></div>
<svg style="left:722px;top:612px;" width="9" height="16" viewBox="0 0 9 16"><defs><linearGradient id="sth" x1="0" y1="0" x2="0" y2="1"><stop offset="0" stop-color="#fbfbfb"/><stop offset="0.6" stop-color="#e9e9e9"/><stop offset="1" stop-color="#d4d4d4"/></linearGradient></defs><path d="M0.5 1.5 Q0.5 0.5 1.5 0.5 H7.5 Q8.5 0.5 8.5 1.5 V11.5 L4.5 15.3 L0.5 11.5z" fill="url(#sth)" stroke="#7a7a7a"/></svg>
<svg style="left:835px;top:623px;" width="9" height="9" viewBox="0 0 9 9"><rect x="7" y="1" width="1.5" height="1.5" fill="#bbb"/><rect x="4" y="4" width="1.5" height="1.5" fill="#bbb"/><rect x="7" y="4" width="1.5" height="1.5" fill="#bbb"/><rect x="1" y="7" width="1.5" height="1.5" fill="#bbb"/><rect x="4" y="7" width="1.5" height="1.5" fill="#bbb"/><rect x="7" y="7" width="1.5" height="1.5" fill="#bbb"/></svg>
<svg style="left:0;top:0" width="1" height="1"><defs><linearGradient id="ibg" x1="0" y1="0" x2="0" y2="1"><stop offset="0" stop-color="#ffffff"/><stop offset="1" stop-color="#dfe6f2"/></linearGradient><linearGradient id="ibar" x1="0" y1="0" x2="0" y2="1"><stop offset="0" stop-color="#96a6d6"/><stop offset="0.5" stop-color="#6d87c4"/><stop offset="1" stop-color="#3b56ad"/></linearGradient><linearGradient id="icube" x1="0" y1="0" x2="1" y2="1"><stop offset="0" stop-color="#ffffff"/><stop offset="1" stop-color="#d3dcea"/></linearGradient></defs></svg>
<svg style="left:22px;top:63px" width="32" height="32" viewBox="0 0 32 32"><rect x="1" y="9" width="9" height="22" rx="1" fill="#a6ee9a" stroke="#4da24d" stroke-width="1.6"/><rect x="12" y="12" width="9" height="19" rx="1" fill="#f7b8a0" stroke="#b04a50" stroke-width="1.6"/><rect x="23" y="1" width="9" height="30" rx="1" fill="#8db3f5" stroke="#3e56b0" stroke-width="1.6"/><path d="M5 9 L28 27" stroke="#3a3a3a" stroke-width="6" stroke-linecap="round"/><path d="M5 9 L28 27" stroke="#9a9a9a" stroke-width="4" stroke-linecap="round"/><path d="M5 9 L8 11.4" stroke="#fff" stroke-width="4" stroke-linecap="round"/><path d="M25 24.6 L28 27" stroke="#fff" stroke-width="4" stroke-linecap="round"/><path d="M13 2 L14.8 6 L19 6.3 L15.8 9 L16.8 13 L13 10.8 L9.2 13 L10.2 9 L7 6.3 L11.2 6z" fill="#ffe23a" stroke="#f08a10" stroke-width="1.2"/><path d="M22 3 L23.4 6 L26.6 6.3 L24.2 8.4 L25 11.5 L22 9.8 L19 11.5 L19.8 8.4 L17.4 6.3 L20.6 6z" fill="#ffe23a" stroke="#f08a10" stroke-width="1.2"/><path d="M29 5.2 L30 7.3 L32 7.5 L30.6 8.8 L31 11 L29 9.9 L27 11 L27.4 8.8 L26 7.5 L28 7.3z" fill="#ffe23a" stroke="#f08a10" stroke-width="1"/></svg>
<svg style="left:81px;top:65px" width="28" height="28" viewBox="0 0 28 28"><rect x="0.5" y="0.5" width="27" height="27" fill="url(#ibg)" stroke="#1e3a5c" stroke-width="1.3"/><path d="M1 4.5h2" stroke="#1e3a5c" stroke-width="1"/><path d="M1 9.5h2" stroke="#1e3a5c" stroke-width="1"/><path d="M1 14.5h2" stroke="#1e3a5c" stroke-width="1"/><path d="M1 19.5h2" stroke="#1e3a5c" stroke-width="1"/><path d="M1 24.5h2" stroke="#1e3a5c" stroke-width="1"/><path d="M4.5 27v-2" stroke="#1e3a5c" stroke-width="1"/><path d="M9.5 27v-2" stroke="#1e3a5c" stroke-width="1"/><path d="M14.5 27v-2" stroke="#1e3a5c" stroke-width="1"/><path d="M19.5 27v-2" stroke="#1e3a5c" stroke-width="1"/><path d="M24.5 27v-2" stroke="#1e3a5c" stroke-width="1"/><circle cx="18.5" cy="4.4" r="1.6" fill="#2f50a8"/><circle cx="14.5" cy="8.4" r="1.6" fill="#2f50a8"/><circle cx="7.5" cy="10.4" r="1.6" fill="#2f50a8"/><circle cx="23.4" cy="9.5" r="1.6" fill="#2f50a8"/><circle cx="22.5" cy="14.4" r="1.6" fill="#2f50a8"/><circle cx="5.5" cy="17.4" r="1.6" fill="#2f50a8"/><circle cx="16.6" cy="19.3" r="1.6" fill="#2f50a8"/><circle cx="10.5" cy="22.4" r="1.6" fill="#2f50a8"/></svg>
<svg style="left:123px;top:65px" width="28" height="28" viewBox="0 0 28 28"><rect x="0.5" y="0.5" width="27" height="27" fill="url(#ibg)" stroke="#1e3a5c" stroke-width="1.3"/><polyline points="3.4,24.4 5.5,15.6 10.5,20.1 11.6,10.8 18.3,14.3 22.5,5.5 24.6,8.4" fill="none" stroke="#4767b5" stroke-width="1.4"/></svg>
<svg style="left:176px;top:65px" width="28" height="28" viewBox="0 0 28 28"><rect x="0.5" y="0.5" width="27" height="27" fill="url(#ibg)" stroke="#1e3a5c" stroke-width="1.3"/><path d="M1 4.5h2" stroke="#1e3a5c" stroke-width="1"/><path d="M1 9.5h2" stroke="#1e3a5c" stroke-width="1"/><path d="M1 14.5h2" stroke="#1e3a5c" stroke-width="1"/><path d="M1 19.5h2" stroke="#1e3a5c" stroke-width="1"/><path d="M1 24.5h2" stroke="#1e3a5c" stroke-width="1"/><path d="M4.5 27v-2" stroke="#1e3a5c" stroke-width="1"/><path d="M9.5 27v-2" stroke="#1e3a5c" stroke-width="1"/><path d="M14.5 27v-2" stroke="#1e3a5c" stroke-width="1"/><path d="M19.5 27v-2" stroke="#1e3a5c" stroke-width="1"/><path d="M24.5 27v-2" stroke="#1e3a5c" stroke-width="1"/><polyline points="3.4,24.4 5.5,17.2 7.6,22.5 13.5,10.3 16.6,15.3 20.4,4.4 24.4,12.4" fill="none" stroke="#3d5db0" stroke-width="1.6"/><circle cx="3.4" cy="24.4" r="1.9" fill="#3d5db0"/><circle cx="5.5" cy="17.2" r="1.9" fill="#3d5db0"/><circle cx="7.6" cy="22.5" r="1.9" fill="#3d5db0"/><circle cx="13.5" cy="10.3" r="1.9" fill="#3d5db0"/><circle cx="16.6" cy="15.3" r="1.9" fill="#3d5db0"/><circle cx="20.4" cy="4.4" r="1.9" fill="#3d5db0"/><circle cx="24.4" cy="12.4" r="1.9" fill="#3d5db0"/></svg>
<svg style="left:230px;top:65px" width="28" height="28" viewBox="0 0 28 28"><rect x="0.5" y="0.5" width="27" height="27" fill="url(#ibg)" stroke="#1e3a5c" stroke-width="1.3"/><rect x="4.2" y="12.1" width="3.8" height="14" fill="url(#ibar)"/><rect x="12.3" y="5" width="3.7" height="21" fill="url(#ibar)"/><rect x="20.4" y="15.1" width="3.5" height="11" fill="url(#ibar)"/></svg>
<svg style="left:272px;top:65px" width="28" height="28" viewBox="0 0 28 28"><rect x="0.5" y="0.5" width="27" height="27" fill="url(#ibg)" stroke="#1e3a5c" stroke-width="1.3"/><path d="M1 4.5h2" stroke="#1e3a5c" stroke-width="1"/><path d="M1 9.5h2" stroke="#1e3a5c" stroke-width="1"/><path d="M1 14.5h2" stroke="#1e3a5c" stroke-width="1"/><path d="M1 19.5h2" stroke="#1e3a5c" stroke-width="1"/><path d="M1 24.5h2" stroke="#1e3a5c" stroke-width="1"/><path d="M4.5 27v-2" stroke="#1e3a5c" stroke-width="1"/><path d="M9.5 27v-2" stroke="#1e3a5c" stroke-width="1"/><path d="M14.5 27v-2" stroke="#1e3a5c" stroke-width="1"/><path d="M19.5 27v-2" stroke="#1e3a5c" stroke-width="1"/><path d="M24.5 27v-2" stroke="#1e3a5c" stroke-width="1"/><path d="M3.1 26.5 L3.6 18.3 L6.3 10 L10.5 18 L12.4 6.3 L18.3 20.6 L21.4 3.4 L25.7 26.5z" fill="#8c9fd5" stroke="#3a56b0" stroke-width="1.3" stroke-linejoin="round"/></svg>
<svg style="left:312px;top:63px" width="32" height="32" viewBox="0 0 32 32"><circle cx="16" cy="16" r="13.8" fill="url(#ibg)" stroke="#26446e" stroke-width="1.4"/><circle cx="16" cy="16" r="5.2" fill="none" stroke="#26446e" stroke-width="1.3"/><path d="M2.5 16 H29.5 M16 2.5 V29.5" stroke="#26446e" stroke-width="1.3"/><circle cx="20.5" cy="6.4" r="1.5" fill="#2f50b0"/><circle cx="9.4" cy="9.4" r="1.5" fill="#2f50b0"/><circle cx="20.5" cy="13.3" r="1.5" fill="#2f50b0"/><circle cx="7.2" cy="16.3" r="1.5" fill="#2f50b0"/><circle cx="25.3" cy="19.5" r="1.5" fill="#2f50b0"/><circle cx="12.5" cy="25.3" r="1.5" fill="#2f50b0"/><circle cx="19.5" cy="25.3" r="1.5" fill="#2f50b0"/></svg>
<svg style="left:354px;top:64px" width="32" height="32" viewBox="0 0 32 32"><path d="M11.2 2 L21.8 2 L29.8 12.3 L27.7 23 L15.5 28.6 L3.8 22.7 L1.9 11.3z" fill="url(#ibg)" stroke="#26446e" stroke-width="1.1"/><path d="M15.7 13.7 L20.5 4.5 L23 11 L27 14 L22 22 L15.7 26 L9 20 L7.5 12 L13 7z" fill="#98acdf"/><path d="M15.7 13.7 L15.7 26 M15.7 13.7 L8 11 M15.7 13.7 L12.5 6 M15.7 13.7 L21 13.7 M15.7 13.7 L20 19 M15.7 13.7 L12 19" stroke="#3553b3" stroke-width="1.1"/></svg>
<svg style="left:569px;top:65px" width="28" height="28" viewBox="0 0 28 28"><rect x="0.5" y="0.5" width="27" height="27" fill="#f0f2f8" stroke="#1e3a5c" stroke-width="1.3"/><rect x="1" y="1" width="26" height="26" fill="none" stroke="#1e3a5c" stroke-width="1.6"/><rect x="3" y="1.3" width="1" height="1" fill="#fff"/><rect x="3" y="25.7" width="1" height="1" fill="#fff"/><rect x="1.3" y="3" width="1" height="1" fill="#fff"/><rect x="25.7" y="3" width="1" height="1" fill="#fff"/><rect x="5" y="1.3" width="1" height="1" fill="#fff"/><rect x="5" y="25.7" width="1" height="1" fill="#fff"/><rect x="1.3" y="5" width="1" height="1" fill="#fff"/><rect x="25.7" y="5" width="1" height="1" fill="#fff"/><rect x="7" y="1.3" width="1" height="1" fill="#fff"/><rect x="7" y="25.7" width="1" height="1" fill="#fff"/><rect x="1.3" y="7" width="1" height="1" fill="#fff"/><rect x="25.7" y="7" width="1" height="1" fill="#fff"/><rect x="9" y="1.3" width="1" height="1" fill="#fff"/><rect x="9" y="25.7" width="1" height="1" fill="#fff"/><rect x="1.3" y="9" width="1" height="1" fill="#fff"/><rect x="25.7" y="9" width="1" height="1" fill="#fff"/><rect x="11" y="1.3" width="1" height="1" fill="#fff"/><rect x="11" y="25.7" width="1" height="1" fill="#fff"/><rect x="1.3" y="11" width="1" height="1" fill="#fff"/><rect x="25.7" y="11" width="1" height="1" fill="#fff"/><rect x="13" y="1.3" width="1" height="1" fill="#fff"/><rect x="13" y="25.7" width="1" height="1" fill="#fff"/><rect x="1.3" y="13" width="1" height="1" fill="#fff"/><rect x="25.7" y="13" width="1" height="1" fill="#fff"/><rect x="15" y="1.3" width="1" height="1" fill="#fff"/><rect x="15" y="25.7" width="1" height="1" fill="#fff"/><rect x="1.3" y="15" width="1" height="1" fill="#fff"/><rect x="25.7" y="15" width="1" height="1" fill="#fff"/><rect x="17" y="1.3" width="1" height="1" fill="#fff"/><rect x="17" y="25.7" width="1" height="1" fill="#fff"/><rect x="1.3" y="17" width="1" height="1" fill="#fff"/><rect x="25.7" y="17" width="1" height="1" fill="#fff"/><rect x="19" y="1.3" width="1" height="1" fill="#fff"/><rect x="19" y="25.7" width="1" height="1" fill="#fff"/><rect x="1.3" y="19" width="1" height="1" fill="#fff"/><rect x="25.7" y="19" width="1" height="1" fill="#fff"/><rect x="21" y="1.3" width="1" height="1" fill="#fff"/><rect x="21" y="25.7" width="1" height="1" fill="#fff"/><rect x="1.3" y="21" width="1" height="1" fill="#fff"/><rect x="25.7" y="21" width="1" height="1" fill="#fff"/><rect x="23" y="1.3" width="1" height="1" fill="#fff"/><rect x="23" y="25.7" width="1" height="1" fill="#fff"/><rect x="1.3" y="23" width="1" height="1" fill="#fff"/><rect x="25.7" y="23" width="1" height="1" fill="#fff"/><rect x="25" y="1.3" width="1" height="1" fill="#fff"/><rect x="25" y="25.7" width="1" height="1" fill="#fff"/><rect x="1.3" y="25" width="1" height="1" fill="#fff"/><rect x="25.7" y="25" width="1" height="1" fill="#fff"/><path d="M1 6 C5 5 7 4 8 1 M1 11 C4 11 6 13 8 16 C10 19 14 20 15 22 L15 27 M1 19 C5 18 7 20 7 27 M14 1 C16 4 18 7 22 7 L27 7.5 M27 12 C24 14 21 19 20 27" fill="none" stroke="#3a52b0" stroke-width="1.1"/><path d="M8.5 7 C9 5 14 5 16 7 L17.5 10 L17 15 L11 15 L9 11z" fill="none" stroke="#2a2e9a" stroke-width="1.2"/></svg>
<svg style="left:613px;top:64px" width="31" height="31" viewBox="0 0 31 31"><path d="M7.7 0.7 H29.5 V22.7 L22.3 29.5 H0.7 V7 z" fill="url(#icube)" stroke="#1e3a5c" stroke-width="1.3"/><path d="M0.7 7 H22.3 V29.5 M22.3 7 L29.5 0.7" fill="none" stroke="#1e3a5c" stroke-width="1.1"/><path d="M0.7 7 H22.3" stroke="#fff" stroke-width="1"/><path d="M0.7 7 H22.3 V29.5" fill="none" stroke="#1e3a5c" stroke-width="1" stroke-dasharray="1.5 1"/><circle cx="15.5" cy="4.5" r="2" fill="#2a4c7c"/><circle cx="22" cy="6.5" r="2" fill="#2a4c7c"/><circle cx="14" cy="14" r="2" fill="#2a4c7c"/><circle cx="4" cy="14.5" r="2" fill="#2a4c7c"/><circle cx="20" cy="21" r="2" fill="#2a4c7c"/><circle cx="9" cy="23" r="2" fill="#2a4c7c"/><path d="M7.7 0.7 V22.7 H29.5 M7.7 22.7 L0.7 29.5" fill="none" stroke="#1e3a5c" stroke-width="1" stroke-dasharray="1.5 1.2"/></svg>
<svg style="left:655px;top:64px" width="31" height="31" viewBox="0 0 31 31"><path d="M7.7 0.7 H29.5 V22.7 L22.3 29.5 H0.7 V7 z" fill="url(#icube)" stroke="#1e3a5c" stroke-width="1.3"/><path d="M0.7 7 H22.3 V29.5 M22.3 7 L29.5 0.7" fill="none" stroke="#1e3a5c" stroke-width="1.1"/><path d="M3 10 L12 21 L14 8 L18 20 L23 6 L17 24 L13 15 L10 24 L28 4" fill="none" stroke="#3d5a9e" stroke-width="1.6"/><path d="M7.7 0.7 V22.7 H29.5 M7.7 22.7 L0.7 29.5" fill="none" stroke="#1e3a5c" stroke-width="1" stroke-dasharray="1.5 1.2"/></svg>
<svg style="left:697px;top:64px" width="31" height="31" viewBox="0 0 31 31"><path d="M7.7 0.7 H29.5 V22.7 L22.3 29.5 H0.7 V7 z" fill="url(#icube)" stroke="#1e3a5c" stroke-width="1.3"/><path d="M0.7 7 H22.3 V29.5 M22.3 7 L29.5 0.7" fill="none" stroke="#1e3a5c" stroke-width="1.1"/><defs><linearGradient id="mgr" x1="0" y1="0" x2="0" y2="1"><stop offset="0" stop-color="#7fa3cf"/><stop offset="0.5" stop-color="#3d6596"/><stop offset="1" stop-color="#23395c"/></linearGradient></defs><path d="M5.5 3 C7 6 7.5 9 9 11 C11 14 14 16 17 19 C19 21 22 22 25 23.5 L21 26 C17 27.5 10 27.5 3 25 L6 21 C5 15 5.5 8 5.5 3z" fill="url(#mgr)"/><path d="M3 25 C10 27.5 17 27.5 21 26 L25 23.5" fill="none" stroke="#161c2a" stroke-width="1.6"/><path d="M7.7 0.7 V22.7 H29.5 M7.7 22.7 L0.7 29.5" fill="none" stroke="#1e3a5c" stroke-width="1" stroke-dasharray="1.5 1.2"/></svg>
<svg style="left:739px;top:64px" width="31" height="31" viewBox="0 0 31 31"><path d="M7.7 0.7 H29.5 V22.7 L22.3 29.5 H0.7 V7 z" fill="url(#icube)" stroke="#1e3a5c" stroke-width="1.3"/><path d="M0.7 7 H22.3 V29.5 M22.3 7 L29.5 0.7" fill="none" stroke="#1e3a5c" stroke-width="1.1"/><path d="M4 7 H22" stroke="#1e3a5c" stroke-width="1" stroke-dasharray="1.5 1.2"/><rect x="4" y="17" width="4" height="11" fill="#466c9e"/><rect x="7.5" y="7" width="5" height="21" fill="#3d6296"/><rect x="11.5" y="19" width="4" height="9" fill="#3d6296"/><rect x="15.5" y="12" width="5" height="16" fill="#446a9c"/><rect x="20.5" y="3" width="5" height="24" fill="#3a5f93"/><path d="M8 8V27M16 13V27M21 4V26" stroke="#a9c2e2" stroke-width="0.8"/></svg>
<svg style="left:808px;top:66px" width="28" height="26" viewBox="0 0 28 26"><rect x="1" y="0.5" width="14" height="25" rx="1" fill="#9ec4ef" stroke="#86b2e6"/><rect x="2.5" y="5" width="11" height="13" fill="#eef3fa"/><path d="M2 20h12M2 23h12" stroke="#cfe0f5" stroke-width="1.2"/><rect x="15" y="8" width="11" height="11" fill="#eef5e8" stroke="#9aa6b8"/><path d="M18 18V14M21 18V11M24 18V9" stroke="#3a78b8" stroke-width="1.6"/><path d="M3 17 L6 2 L8 6 L13 4 C18 3 23 4 25 7 L21 8 C18 9 16 12 17 15 L15 17 z" fill="#a7e0a5" stroke="#8bc98a" stroke-width="0.8"/></svg>
<svg style="left:395px;top:64px" width="14" height="14" viewBox="0 0 14 14"><path d="M7 0.8 L13.3 13.2 H0.7z" fill="#f2f4f8" stroke="#7f8fb5" stroke-width="1" stroke-dasharray="1 0.8"/><circle cx="6" cy="7" r="0.8" fill="#4a62b0"/><circle cx="9" cy="8" r="0.8" fill="#4a62b0"/><circle cx="4" cy="11" r="0.8" fill="#4a62b0"/></svg>
<svg style="left:395px;top:86px" width="14" height="14" viewBox="0 0 14 14"><rect x="0.5" y="0.5" width="13" height="13" fill="#fff" stroke="#55617c" stroke-width="1" stroke-dasharray="1 0.6"/><path d="M3 3V11M6.5 4V11M10 3V11" stroke="#5a70c0" stroke-width="1.5"/></svg>
<svg style="left:395px;top:108px" width="14" height="14" viewBox="0 0 14 14"><circle cx="7" cy="7.5" r="6.3" fill="#4a62b8" stroke="#2d3f8a" stroke-width="0.6"/><path d="M7 7.5 L7 1.2 A6.3 6.3 0 0 0 1 5.5z" fill="#fff"/><path d="M7 7.5 L13.3 7.5 A6.3 6.3 0 0 0 9 1.5z" fill="#8cacf0"/><path d="M7 7.5 L1 9 A6.3 6.3 0 0 0 6 13.7z" fill="#7086c8"/><path d="M8 6.5 L8 0.5 L12 2z" fill="#1c2c8a"/></svg>
<svg style="left:466px;top:65px" width="15" height="12" viewBox="0 0 15 12"><rect x="0.5" y="0.5" width="14" height="11" fill="#eef0f5" stroke="#9a9a9a"/><circle cx="7" cy="2.5" r="1.1" fill="#4a5a8a"/><circle cx="11" cy="4" r="1.1" fill="#4a5a8a"/><circle cx="5" cy="7" r="1.4" fill="#4a5a8a"/><circle cx="11.5" cy="8" r="1.5" fill="#4a5a8a"/></svg>
<svg style="left:467px;top:87px" width="14" height="12" viewBox="0 0 14 12"><rect x="0.5" y="0.5" width="13" height="11" fill="#f2f5fa" stroke="#2a4060" stroke-width="1.1"/><path d="M3 9L5.5 6.5M3 9h2M3 9V7M11 9L8.5 6.5M11 9h-2M11 9V7M9 3L11 5M11 3H9.5M11 3V4.5" stroke="#2a4a8a" stroke-width="0.9" fill="none"/></svg>
<svg style="left:464px;top:108px" width="17" height="14" viewBox="0 0 17 14"><rect x="0" y="3" width="2.5" height="2" fill="#8aa0c8"/><rect x="0" y="7" width="2.5" height="2" fill="#8aa0c8"/><rect x="0" y="10" width="2.5" height="2" fill="#8aa0c8"/><rect x="4.5" y="0.5" width="12" height="13" fill="#fff" stroke="#2a4060" stroke-width="1"/><path d="M7 2V13" stroke="#2a4060" stroke-dasharray="1 1" stroke-width="1"/><path d="M9 3.5h6M9 6.5h6M9 9.5h6" stroke="#2a4a9a" stroke-width="1.2"/><path d="M12.5 10v3M11 11.5h3" stroke="#2a4a9a" stroke-width="1"/></svg>
</body></html>
